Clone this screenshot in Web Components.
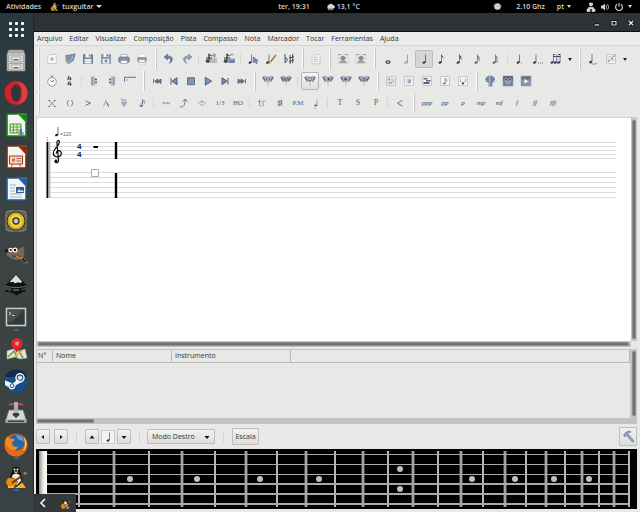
<!DOCTYPE html>
<html lang="pt">
<head>
<meta charset="utf-8">
<title>tuxguitar</title>
<style>
    html, body {
        margin: 0;
        height: 100%;
    }
    body {
        display: flex;
        flex-direction: column;
        overflow: hidden;
        background: #000;
        color: #2e3436;
        font-family: "Open Sans", "Noto Sans", sans-serif;
        font-size: 7px;
        line-height: 10px;
    }
    .desktop {
        flex: 1;
        display: flex;
        min-height: 0;
    }
</style>
</head>
<body>
<top-bar></top-bar>
<div class="desktop">
    <side-dock></side-dock>
    <app-window>
        <menu-bar slot="menu"></menu-bar>
        <tool-rows slot="tools"></tool-rows>
        <score-view></score-view>
        <track-list></track-list>
        <fret-controls></fret-controls>
        <fret-board></fret-board>
    </app-window>
</div>
<tray-drawer></tray-drawer>

<script>
const INK = '#26344f';

const svg = (body, size = 12, px = size) =>
    `<svg width="${px}" height="${px}" viewBox="0 0 ${size} ${size}" fill="none" aria-hidden="true">${body}</svg>`;

// note head with stem and flags, stem foot at x,y
function note(x, y, flags = 0, color = INK, hollow = false) {
    let s = `<ellipse cx="${x - 1.4}" cy="${y}" rx="1.6" ry="1.1" transform="rotate(-25 ${x - 1.4} ${y})" ${hollow ? `stroke="${color}" stroke-width=".7"` : `fill="${color}"`}/>`;
    s += `<path d="M${x} ${y}V${y - 8}" stroke="${color}" stroke-width=".6"/>`;
    for (let i = 0; i < flags; i++) {
        const t = y - 8 + i * 1.6;
        s += `<path d="M${x} ${t}c.3 1.6 2.8 2 2 4.600c-.1-1.7-1-2.3-2-2.7z" fill="${color}"/>`;
    }
    return s;
}

const paper = '<path d="M1.5 1.5h9v9h-9z" fill="#f5f5f4" stroke="#b9bcc0" stroke-width=".8"/>';
const flag = (n) => `<path d="M.8 2l2.500-.6 2.700.9 2.700-.9 2.500.6-2 4.600-1.700-.7L6 7.200l-1.500-1.300-1.700.7z" fill="#a3afc2" stroke="#7485a0" stroke-width=".6"/><path d="M1 2.200l1.800 3.300M11 2.200L9.200 5.500" stroke="#35425a" stroke-width=".9"/><path d="M6 7.500v3.500" stroke="#b2b5ba" stroke-width=".8"/>` +
    ['<path d="M4 4h1.200M7 4h1.200" stroke="#2f3b52"/>', '<path d="M4 2.500v3M6 3v3M8 2.500v3" stroke="#35425a" stroke-width=".8"/>', '<circle cx="6" cy="4.300" r="1.300" fill="#fff" stroke="#35425a" stroke-width=".7"/>', '<path d="M7.500 2.800L5 4.300l2.500 1.300z" fill="#35425a"/>', '<path d="M4.500 2.800L7.500 4.300 4.500 5.600z" fill="#35425a"/>', '<path d="M4.500 3l1.500 1.500L4.500 6m2-3L8 4.500 6.500 6" stroke="#35425a" stroke-width=".7"/>'][n];
const track = (mark) => `<path d="M5 5h7v5H5z" fill="#b8bbbf"/><path d="M5 2.500h3V1h2v1.500" stroke="#999da3"/><path d="M4 .8v5.400" stroke="#333d46" stroke-width="1.400"/><path d="M4 1l2.500 2M1 5h6M1 7h4" stroke="#333d46"/><ellipse cx="2.800" cy="8.300" rx="2" ry="1.700" fill="#424b55"/>${mark}`;

const ICONS = {
    fresh: '<path d="M1.800 4l2.200-2.500h6.200v9H1.800z" fill="#fbfbfb" stroke="#b8bbbf" stroke-width=".7"/><path d="M6 4v4M4 6h4" stroke="#8793a8" stroke-width=".9"/>',
    open: '<path d="M1.500 2.500l3 7L3 11 1 8z" fill="#b0b5bb"/><path d="M1.500 2.500l4-.5 5.800-1.200-1.800 6.500-4.700 3.500z" fill="#7e93b0" stroke="#5e7087" stroke-width=".6"/><path d="M4 9.500c2-1 4-3.500 5-6.500" stroke="#bac8da" stroke-width=".8"/>',
    save: '<path d="M1.500 1.500h9v9h-9z" fill="#6f84a3" stroke="#64748c" stroke-width=".8"/><path d="M3.500 1h5v3.500h-5zM2.700 6h6.600v4.500H2.700z" fill="#f4f5f6"/><path d="M6.800 1.500h1v2h-1z" fill="#566784"/><path d="M3.500 8h5" stroke="#a4a7ac" stroke-width=".7"/>',
    saveas: '<path d="M1.500 1.500h9v9h-9z" fill="#8494ab" stroke="#8490a2" stroke-width=".8"/><path d="M3.500 1h5v3h-5zM2.700 5.800h6.600v4.700H2.700z" fill="#f4f5f6"/><path d="M6 6v3M4.500 7.500L6 9.300l1.500-1.800" stroke="#566784"/><path d="M6.500 1.500h1.500v2h-1.500z" fill="#566784"/>',
    print: '<path d="M3 1.500h6v4H3z" fill="#fff" stroke="#9da2a9" stroke-width=".7"/><rect x=".8" y="4" width="10.400" height="5.500" rx="1.500" fill="#7e91ad" stroke="#5c6c84" stroke-width=".7"/><path d="M2.800 7.500h6.400V10.500H2.800z" fill="#fafafa" stroke="#8c929a" stroke-width=".6"/>',
    preview: '<path d="M2.500.8h7v10.400h-7z" fill="#fff" stroke="#c6c8ca" stroke-width=".6"/><rect x="1.300" y="4" width="9.400" height="4.500" rx="1" fill="#999"/><path d="M3 6.500h6v3H3z" fill="#f8f8f8" stroke="#777" stroke-width=".5"/>',
    undo: '<path d="M4.500 1L1 4l3.500 3V5.200c3-.2 4 1 2 5.300 4.500-3 4-7.600-2-7.600z" fill="#6c80a0" stroke="#475876" stroke-width=".5"/>',
    redo: '<path d="M7.500 1L11 4 7.500 7V5.200c-3-.2-4 1-2 5.300-4.500-3-4-7.600 2-7.600z" fill="#91a2bb" stroke="#6c7d99" stroke-width=".5"/>',
    trackadd: track('<path d="M8 3h3M9.500 1.500v3" stroke="#6e7782" stroke-width=".8"/>'),
    trackdel: track('<path d="M5.500 6.500h6.500v3.500H5.500z" fill="#7287a8"/>'),
    selnote: note(4.5, 9.5) + '<path d="M6 4l.5 6 1.500-1.500 1.400 2.300 1-.6-1.300-2.200 2-.4z" fill="#7288ac" stroke="#465775" stroke-width=".5"/>',
    edit: note(4, 9.5) + '<path d="M11 2L5.500 8.800" stroke="#a07a3a" stroke-width="1.500"/><path d="M6 8L4 11" stroke="#e28a1c" stroke-width="1.100"/>',
    natural: '<path d="M2 1v9M2 5.500c3-1.500 3 2 0 4.500" stroke="#333e52" stroke-width=".9"/><path d="M7.200 2v9M9.700 1v9M6 5.200l5-1.500M6 8.500L11 7" stroke="#333e52" stroke-width=".9"/>',
    docgray: '<path d="M2 4l2.500-2.500H10v9.300H2z" fill="#f2f2f2" stroke="#c3c4c6" stroke-width=".8"/><path d="M4 4.500h4M3.500 6.500h5M3.500 8.500h5M5 3v6" stroke="#c0c2c5" stroke-width=".7"/>',
    mix: '<path d="M1 2h10v8.500H1z" fill="#eeefef" stroke="#c9cbcd" stroke-width=".7"/><path d="M1 1.500h3m4 0h3" stroke="#999ea5"/><circle cx="6" cy="5" r="2.300" fill="#848c96"/><path d="M2.500 9.500c1-3 6-3 7 0zM2 5h8" fill="#a4a9b0" stroke="#81868e" stroke-width=".7"/>',
    whole: '<ellipse cx="6" cy="9" rx="2" ry="1.300" stroke="#26344f" stroke-width="1.100"/>',
    half: note(7.5, 9.5, 0, '#69758a', true),
    n4: note(7.5, 9.5),
    n8: note(5.5, 9.5, 1),
    n16: note(5.5, 9.5, 2),
    n32: note(5.5, 9.5, 3, '#566078'),
    n64: note(5.5, 9.5, 4, '#566078'),
    dot: note(5.500, 9.5) + '<circle cx="7.500" cy="10" r=".6" fill="#69758a"/>',
    ddot: note(4, 9.5) + '<path d="M6 10h1m1 0h1m1 0h1" stroke="#69758a"/>',
    triplet: note(3.500, 9.5) + note(6.800, 9.5) + note(10.100, 9.5) + '<path d="M3 3.500h7.500M3 1.500h2m3 0h2.500" stroke="#33405a" stroke-width=".9"/>',
    tie: note(5, 9) + '<path d="M4 10c1.500 1.500 5 1.500 6 0" stroke="#69758a" stroke-width=".8"/>',
    chord: paper + '<path d="M3 3.500h6M3 3.500v5m2-5v5m2-5v5m2-5v5M3 7h6" stroke="#b2b6bd" stroke-width=".5"/><circle cx="4" cy="8" r=".8" fill="#566784"/><circle cx="7" cy="5.500" r=".8" fill="#566784"/><circle cx="9" cy="3" r=".7" fill="#566784"/>',
    tempo: '<circle cx="6" cy="6.800" r="4.300" fill="#fafafa" stroke="#9b9d9f" stroke-width="1"/><path d="M6 1v1.500M4.700 1h2.600" stroke="#888" stroke-width=".9"/><path d="M6 7l2-2M4.500 5.500L6 7" stroke="#d03838" stroke-width=".9"/>',
    meter: '<path d="M5.200 1L3.800 4h3.600M6.500 2.300v3M5.500 6.300L4 9.200h3.500M6.500 7.500v3.300" stroke="#35435c" stroke-width="1.100"/>',
    repopen: '<path d="M4 1.500v9" stroke="#8c9bb3" stroke-width="1.800"/><path d="M6 1.500v9" stroke="#55627a" stroke-width=".7"/><circle cx="8" cy="4.500" r=".9" fill="#38465f"/><circle cx="8" cy="7.500" r=".9" fill="#38465f"/>',
    repclose: '<path d="M8 1.500v9" stroke="#8c9bb3" stroke-width="1.800"/><path d="M6 1.500v9" stroke="#55627a" stroke-width=".7"/><circle cx="4" cy="4.500" r=".9" fill="#38465f"/><circle cx="4" cy="7.500" r=".9" fill="#38465f"/>',
    repalt: '<path d="M.5 6.500V2.300H12" stroke="#54637d" stroke-width=".9"/><path d="M3 4v2" stroke="#7c879a" stroke-width=".7"/>',
    first: '<path d="M2.500 4v4.500M7 4L3.500 6.200 7 8.500zM10 4L7 6.200 10 8.500z" fill="#6d7f9b" stroke="#3e4e69" stroke-width=".7"/>',
    prev: '<path d="M3 3v6.500M9 2.800L4 6.200l5 3.500z" fill="#8090a9" stroke="#3e4e69" stroke-width=".9"/>',
    stop: '<path d="M2.500 2.700h7v7h-7z" fill="#7f93b2" stroke="#4d5d79" stroke-width=".8"/>',
    play: '<path d="M3.300 2.300L9.700 6.200l-6.400 4z" fill="#7f93b2" stroke="#3e4e69" stroke-width=".8"/>',
    next: '<path d="M9 3v6.500M3 2.800l5 3.400-5 3.500z" fill="#8090a9" stroke="#3e4e69" stroke-width=".9"/>',
    last: '<path d="M9.500 4v4.500M5 4l3.500 2.200L5 8.500zM2 4l3 2.200-3 2.300z" fill="#6d7f9b" stroke="#3e4e69" stroke-width=".7"/>',
    m0: flag(0), m1: flag(1), m2: flag(2), m3: flag(3), m4: flag(4), m5: flag(5),
    fretview: paper + '<path d="M1.500 4h9M1.500 6h9M1.500 8h9M4 2v8M7 2v8" stroke="#b2b5ba" stroke-width=".6"/><path d="M3 4h2m3 2h1M4 8h3" stroke="#6a717b" stroke-width=".8"/>',
    lyric: paper + '<path d="M3 4h6M3 6h5M3 8h3" stroke="#9ba8ba" stroke-width=".7"/><path d="M5.500 4.500v4l2.500-1V5z" fill="#8a9cb6"/>',
    multi: paper + '<path d="M2.500 3h4v1.500h-4zM5 5h4.500v1.500H5zM2.500 7h6v2h-6z" fill="#566784"/>',
    scoreview: paper + '<path d="M6.300 8.500V3c.2 1.500 2 1.500 1.500 3.300" stroke="#6f8098" stroke-width=".8"/><ellipse cx="5.200" cy="8.500" rx="1.400" ry="1" fill="#6f8098"/>',
    mixer: paper + '<path d="M3.500 3.500v3m2.500 0v3m2.500-6v3M3 5.500l3 3.300 3-3.300" stroke="#8f949b" stroke-width=".7"/><circle cx="6" cy="8.500" r=".9" fill="#333"/>',
    guitar: '<path d="M2.500 2.500L4 .8h4.500L9.800 2.500v4L8.300 8v3.500H4.500V8L2.500 6.500z" fill="#7188a8"/><path d="M2.300 2.500v4m7.700-4v4" stroke="#45536b" stroke-width="1.300" stroke-dasharray="1 .6"/><path d="M5.500 1v10" stroke="#a8bad2"/>',
    eq: '<path d="M1 1h10v10H1z" fill="#76839a" stroke="#8f98a5" stroke-width=".6"/><path d="M1.500 1.500h9v4h-9z" fill="#4c5666"/><circle cx="4" cy="4.500" r="1.600" stroke="#b6c0cf" stroke-width=".7"/><circle cx="8" cy="4.500" r="1.600" stroke="#b6c0cf" stroke-width=".7"/><path d="M3.500 6.500L6 8.500l2.500-2" stroke="#cbd2dc"/>',
    player: '<path d="M1 1h10v10H1z" fill="#8595ad" stroke="#95a0b0" stroke-width=".6"/><path d="M1.500 1.500h9v3h-9z" fill="#657389"/><path d="M4.500 4l3.800 2.200-3.800 2.200z" fill="#fff"/>',
    dead: '<path d="M3.500 4l5 5M8.500 4L3.500 9" stroke="#8793a9" stroke-width="1"/><path d="M2.500 3.500H4M8 3.500h1.500M2.500 9.500H4m4 0h1.500" stroke="#45546f" stroke-width=".9"/>',
    ghost: '<path d="M4.500 3Q1.800 6 4.500 9.300M7.500 3q2.700 3 0 6.300" stroke="#6d7c95" stroke-width=".9"/>',
    accent: '<path d="M3.500 3.800l5 2.300-5 2.300" stroke="#566784" stroke-width=".9"/>',
    heavy: '<path d="M3.500 9.500L6 3.500l2.500 6" stroke="#8f9aad" stroke-width=".9"/><path d="M7 6l1.500 3.500" stroke="#47556e" stroke-width=".9"/>',
    harmonic: '<path d="M3 2h1v2m1-2v2m0-1h1.500m.5-1v2H9" stroke="#7a879d" stroke-width=".6"/><path d="M3.300 5.300h5.400L6 9.700z" fill="#a8b4c7" stroke="#7888a2" stroke-width=".6"/>',
    grace: '<path d="M6.500 9V2.500c.2 2 2.500 2 2 4" stroke="#5d6d88" stroke-width=".8"/><ellipse cx="5.200" cy="9" rx="1.500" ry="1" fill="#5d6d88"/><path d="M3 8l6.500-4.500" stroke="#8591a6" stroke-width=".7"/>',
    vibrato: '<path d="M2.500 6.700l1.500-1.200 1.500 1.300L7 5.500l1.500 1.300L10 5.600" stroke="#566784" stroke-width=".9"/>',
    bend: '<path d="M2 10c4 0 5-2 5-7M4.800 4.500L7.200 2l2.300 2.500" stroke="#657692" stroke-width="1"/>',
    tremolo: '<path d="M2 5l4 4 4-4M6 3v3M4 4l2 2 2-2" stroke="#8d99ad" stroke-width=".8"/>',
    trill: '<path d="M3.500 2.500v6q.7 1 2 .2M2 4.500h3.500M7 9.300v-5q1.500-1 2.500 0" stroke="#77849b" stroke-width=".8"/>',
    trem: '<path d="M5 3v6.500M7.300 2.500V9M3.500 5.500l5-1.500m-5 4l5-1.500" stroke="#66748e" stroke-width=".9"/>',
    stacc: '<path d="M7 8.500V2.500" stroke="#7e8ba1" stroke-width=".7"/><ellipse cx="5.700" cy="8.500" rx="1.500" ry="1" fill="#566784"/><circle cx="5" cy="11" r=".5" fill="#566784"/>',
    fade: '<path d="M8.500 3.300L3.500 6.200l5 2.900" stroke="#566784" stroke-width=".9"/>',
    hammer: '<path d="M1.500 5.500L4 2l4-1 1.200 1-3 .8-.4 1L12 11l-1.300 1.300-6.300-7L3 7z" fill="#91a1b8" stroke="#5f7088" stroke-width=".6"/>'
};

// g = grip, | = divider, v = drop arrow, * = active, + = raised, "text and 'text are lettered
const ROWS = [
    'g fresh open save saveas print preview G undo redo | trackadd trackdel | selnote edit natural G docgray G mix mix G whole half n4* n8 n16 n32 n64 | dot ddot triplet v G tie chord v',
    'g tempo meter | repopen repclose repalt G first~ prev~ stop~ play~ next~ last~ G m0 m1 | m2+ m3 m4 m5 G fretview lyric multi scoreview mixer G guitar eq player',
    'g dead ghost accent heavy harmonic grace | vibrato bend tremolo "1/3 "HO | trill trem "P.M stacc | "T "S "P | fade G \'ppp \'pp \'p \'mp \'mf \'f \'ff \'fff'
];

class ToolButton extends HTMLElement {
    connectedCallback() {
        const shadow = this.attachShadow({ mode: 'open' });
        const icon = this.getAttribute('icon');
        shadow.innerHTML = `
            <style>
                :host { display: block; flex: none; width: 18px; }
                :host([narrow]) { width: 17px; }
                button {
                    display: flex;
                    align-items: center;
                    justify-content: center;
                    box-sizing: border-box;
                    width: 100%;
                    height: 18px;
                    padding: 0;
                    border: 1px solid transparent;
                    border-radius: 2px;
                    background: none;
                    color: #4f5d77;
                    font: 8px/10px "Liberation Serif", serif;
                }
                :host([active]) button { background: #d5d5d4; border-color: #bdbdbb; }
                :host([raised]) button { background: linear-gradient(#f6f6f5, #dededd); border-color: #b4b4b2; }
                :host([dynamic]) button { font-style: italic; font-size: 7px; color: #3b4861; }
                :host([small]) button { font-size: 7px; }
                svg { flex: none; }
            </style>
            <button type="button">${icon ? svg(ICONS[icon]) : '<slot></slot>'}</button>
        `;
    }
}
customElements.define('tool-button', ToolButton);

class ToolRows extends HTMLElement {
    connectedCallback() {
        const shadow = this.attachShadow({ mode: 'open' });
        shadow.innerHTML = `
            <style>
                :host { display: block; padding: 2px 0 3px; }
                .row { display: flex; align-items: center; height: 22px; }
                i { display: block; flex: none; box-sizing: border-box; height: 20px; }
                .grip { width: 9px; padding: 0 3px 0 4px; }
                .grip.lead { width: 7px; padding: 0 3px 0 2px; }
                .grip::before { content: ""; display: block; height: 100%; background: #fff; border-right: 1px solid #c4c4c2; width: 1px; }
                .rule { width: 6px; padding: 5px 3px 5px 2px; }
                .rule::before { content: ""; display: block; height: 100%; background: #d5d5d3; }
                .drop { width: 10px; display: flex; align-items: center; justify-content: center; }
                .drop::before { content: ""; border: 2px solid transparent; border-top: 3px solid #222; border-bottom: 0; }
            </style>
            ${ROWS.map(row => `<div class="row">${row.split(' ').map(ToolRows.cell).join('')}</div>`).join('')}
        `;
    }
    static cell(t) {
        if (t === 'g') return '<i class="grip lead"></i>';
        if (t === 'G') return '<i class="grip"></i>';
        if (t === '|') return '<i class="rule"></i>';
        if (t === 'v') return '<i class="drop"></i>';
        if (t[0] === '"') return `<tool-button ${t.length > 2 ? 'small' : ''}>${t.slice(1)}</tool-button>`;
        if (t[0] === "'") return `<tool-button dynamic>${t.slice(1)}</tool-button>`;
        const flags = (t.includes('*') ? 'active ' : '') + (t.includes('+') ? 'raised ' : '') + (t.includes('~') ? 'narrow' : '');
        return `<tool-button icon="${t.replace(/[*+~]/, '')}" ${flags}></tool-button>`;
    }
}
customElements.define('tool-rows', ToolRows);

const TUX = '<ellipse cx="12" cy="13" rx="6" ry="8" fill="#111"/><circle cx="12" cy="5.500" r="4" fill="#161616"/><path d="M8 11c1-3 7-3 8 0l1 5-4 4H9z" fill="#e9e9e9"/><circle cx="10.500" cy="4.500" r="1" fill="#fff"/><circle cx="13.500" cy="4.500" r="1" fill="#fff"/><path d="M9.500 6.500h5L12 9z" fill="#f4b41a"/><path d="M3 14c3-3 5 0 7-1l4 4c-2 1-2 5-6 5.500S0 18 3 14z" fill="#e58a14" stroke="#7d4208" stroke-width=".7"/><path d="M8 18L21 8.500" stroke="#5a3716" stroke-width="1.800"/><path d="M19 8l3-1.500 1 2L20.500 10z" fill="#888"/><path d="M4 22h6m4 0h6l-2-3z" stroke="#f2b31c" stroke-width="2"/>';
const office = (dark, light, inner) => `<path d="M3 1h12l7 7v15H3z" fill="#f5f5f3" stroke="${dark}" stroke-width="1.600"/><path d="M13 .5h9.500V10z" fill="${light}"/><path d="M15 1l7 8V2z" fill="${dark}"/>${inner}`;

const DOCK = [
    ['Arquivos', '<path d="M5 1h14l2 4v17H3V5z" fill="#d8d8d6" stroke="#777" stroke-width=".8"/><path d="M5 1h14l1.500 3.500h-17z" fill="#a5a8a6"/><path d="M4.500 6h15v7h-15zM4.500 14.500h15v6.500h-15z" fill="#d3d4d1" stroke="#9a9b98" stroke-width=".8"/><path d="M8 8h8v3H8zM8 16h8v3H8z" fill="#f0f0ee" stroke="#8a8b88" stroke-width=".6"/><path d="M10 10.500h4m-4 8h4" stroke="#555"/>'],
    ['Opera', '<ellipse cx="12" cy="12" rx="11.500" ry="11.700" fill="#d71f27"/><path d="M12 .5c7 0 11.500 5 11.500 11.500S19 23.500 12 23.500c4-1 6-6 6-11.500S16 1.500 12 .5z" fill="#e93a3c"/><ellipse cx="12" cy="12" rx="5" ry="8.700" fill="#2b3a3f"/>'],
    ['Calc', office('#1c7d1c', '#39b229', '<path d="M6 11h11v9H6z" fill="#dff0d8" stroke="#3b9d2f"/><path d="M6 14h11m-11 3h11M9.500 11v9M13 11v9" stroke="#3b9d2f" stroke-width=".8"/><path d="M14 18h2v4h-2z" fill="#e9a12c"/><path d="M16 16h2v6h-2z" fill="#3977b8"/><path d="M18 19h2v3h-2z" fill="#7eb6e2"/>')],
    ['Impress', office('#84281a', '#b9461f', '<path d="M5.500 11h13v8h-13z" fill="#f4ddd2" stroke="#8e3a25"/><path d="M8 13.500h3v3H8z" fill="#e06a22"/><path d="M12.500 13.500H17m-4.500 2.500H17" stroke="#c53"/><path d="M9 19l-2 3m8-3l2 3" stroke="#8e3a25" stroke-width=".8"/>')],
    ['Writer', office('#235a9c', '#3b80c8', '<path d="M6 8h6M6 11h5M6 14h5M6 17h12M6 20h12" stroke="#9fb1c3" stroke-width="1.200"/><path d="M12 10h8v6h-8z" fill="#315f91"/><path d="M13 15l2-3 2 2 1-1 2 2z" fill="#dce9f5"/>')],
    ['Rhythmbox', '<rect x="2" y="2" width="20" height="20" rx="3" fill="#5e605d" stroke="#8a8c86"/><circle cx="12" cy="12" r="9" fill="#d9b21b" stroke="#2c2c26"/><circle cx="12" cy="12" r="6.500" fill="#ecd03c"/><circle cx="12" cy="12" r="3.700" fill="#3c3c3b"/><circle cx="12" cy="12" r="2.200" fill="#c9c9c4"/>'],
    ['GIMP', '<path d="M2 10c3-4 7-4 10-1 3-1 6-4 8-4l1 9c-3 6-10 7-15 3-3-1-5-4-4-7z" fill="#746858" stroke="#403930" stroke-width=".7"/><circle cx="6.500" cy="9" r="2.200" fill="#fff"/><circle cx="11" cy="9" r="2.500" fill="#fff"/><circle cx="6.700" cy="9" r="1.100" fill="#111"/><circle cx="11" cy="9" r="1.300" fill="#111"/><ellipse cx="2.500" cy="10" rx="2" ry="1.800" fill="#1b1b1b"/><path d="M8 15c4 1 6-1 9 1" stroke="#312b24"/><path d="M12 15l7 3" stroke="#d07a2a" stroke-width="1.500"/><path d="M18 16.500c3 0 4 3 5.500 5.500-3 0-5.500-1-6-4z" fill="#222" stroke="#bbb" stroke-width=".5"/>'],
    ['Inkscape', '<path d="M12 1.500L1.500 12c-.5 3 5 2 6 4s-3 2-2 3 5 1 7 4c1-2 5-2 6-4s-3-2-1-3 6-1 5-4z" fill="#121212"/><path d="M12 2L6 8.500c1 2 2-1 4 1s3-1 5 0 2 0 3-1z" fill="#dedfe3"/><path d="M2 13c4 2 16 2 20 0" stroke="#81858a" stroke-width=".8"/><path d="M9 17h6" stroke="#888"/><ellipse cx="3" cy="18" rx="2" ry="1" fill="#111"/><ellipse cx="20" cy="18" rx="2" ry="1" fill="#111"/>'],
    ['Terminal', '<path d="M2.500 3.500h19v17h-19z" fill="#343a37" stroke="#d0d1cd" stroke-width="1.500"/><path d="M4 5h16L8 17H4z" fill="#4a504b"/><path d="M5 7l2 1.500L5 10m3 .5h2.500" stroke="#eee" stroke-width=".9"/>', 1],
    ['Mapas', '<path d="M3 14l6-2 6 2 6-2 2 9-7 1-5-2-8 2z" fill="#e3e4dd" stroke="#aaa" stroke-width=".5"/><path d="M4 20l6-6 3 6M15 14l4 7" stroke="#5fa544" stroke-width="1.600"/><path d="M10 20l9-7" stroke="#e7b93b" stroke-width="1.400"/><path d="M12.500 16c-1-4-5-5-5-9.500a5.500 5.500 0 0 1 11 0C18.500 11 14 12 12.500 16z" fill="#e5252b"/><circle cx="13" cy="6.500" r="2" fill="#fff" opacity=".5"/>'],
    ['Steam', '<circle cx="12" cy="12" r="11.700" fill="#174e86"/><path d="M1 8a11.700 11.700 0 0 1 22 0z" fill="#14294e"/><circle cx="16" cy="8.800" r="4" stroke="#f3f7fb" stroke-width="1.500"/><circle cx="16" cy="8.800" r="2.300" fill="#d6e0ea"/><path d="M1 11.500l8 3 4-4 4.500 2.500-6 3.500c0 5-6 5-7 1.500L1 16z" fill="#f4f8fc"/><circle cx="8" cy="16.700" r="1.900" stroke="#174e86"/>'],
    ['Discos', '<path d="M5 9h14l3.500 11h-21z" fill="#d8d9d7" stroke="#777" stroke-width=".7"/><path d="M1.500 18.500h21V22h-21z" fill="#a3a5a3"/><path d="M4 20.300h16" stroke="#3c3d3c" stroke-width="1.500"/><path d="M5 2h14v2.500H5z" fill="#d23b3b"/><path d="M10 1h4v13h-4z" fill="#aeb0af"/><path d="M9 12h6v2h-6z" fill="#3d4041"/><path d="M8 13.500h8L12 17z" fill="#3d4041"/>'],
    ['Firefox', '<circle cx="12" cy="12" r="11.500" fill="#e66a12"/><circle cx="12.500" cy="9.500" r="8.200" fill="#2765ac"/><path d="M12 2c5 0 8 3 8 7-3-3-5-1-7-4z" fill="#55a2d8"/><path d="M1.500 6L4 3l2 3c2-1 4 0 5 1L8 9.500c0 4 3 5 6 4-1 4-5 5-9 2C3 12 1 11 1.500 6z" fill="#f28b1b"/><path d="M20 4c4 5 3 11-1 14 3-6 2-9 1-14z" fill="#fad44b"/>', 1],
    ['TuxGuitar', TUX, 1]
];

class DockItem extends HTMLElement {
    connectedCallback() {
        const shadow = this.attachShadow({ mode: 'open' });
        const [label, art, running] = DOCK[this.getAttribute('index')];
        shadow.innerHTML = `
            <style>
                :host { display: flex; flex-direction: column; align-items: center; height: 32px; }
                button { display: block; border: 0; padding: 4px 0 0; margin: 0; background: none; height: 29px; }
                svg { display: block; }
                i { width: 5px; height: 2px; background: #3667a5; border-radius: 1px; }
            </style>
            <button type="button" aria-label="${label}">${svg(art, 24)}</button>
            ${running ? '<i></i>' : ''}
        `;
    }
}
customElements.define('dock-item', DockItem);

class SideDock extends HTMLElement {
    connectedCallback() {
        const shadow = this.attachShadow({ mode: 'open' });
        shadow.innerHTML = `
            <style>
                :host {
                    display: block;
                    flex: none;
                    box-sizing: border-box;
                    width: 34px;
                    padding-right: 1px;
                    overflow: hidden;
                    background: linear-gradient(#27383f, #3d4443 45%, #394142);
                    border-right: 1px solid #152b30;
                }
                .apps {
                    display: grid;
                    grid-template-columns: repeat(3, 3px);
                    gap: 3px;
                    justify-content: center;
                    align-content: center;
                    height: 31px;
                    padding-top: 1px;
                    box-sizing: border-box;
                }
                .apps b { height: 3px; border-radius: 1px; background: #fff; }
            </style>
            <div class="apps">${'<b></b>'.repeat(9)}</div>
            ${DOCK.map((d, i) => `<dock-item index="${i}"></dock-item>`).join('')}
        `;
    }
}
customElements.define('side-dock', SideDock);

class TopBar extends HTMLElement {
    connectedCallback() {
        const shadow = this.attachShadow({ mode: 'open' });
        shadow.innerHTML = `
            <style>
                :host {
                    display: grid;
                    grid-template-columns: 1fr auto 1fr;
                    align-items: center;
                    height: 13px;
                    flex: none;
                    padding: 0 8px 0 6px;
                    background: #000;
                    color: #d6d6d4;
                    font-weight: 600;
                }
                div, span { display: flex; align-items: center; }
                svg { display: block; }
                .app { margin-left: 9px; gap: 3px; }
                .clock { gap: 16px; }
                .weather { gap: 2px; }
                .status { justify-content: flex-end; }
                .lang { gap: 3px; margin: 0 15px 0 12px; }
                .cpu { margin-left: 14px; }
                .tray { gap: 4px; }
                u { border: 3px solid transparent; border-top-color: #d6d6d4; border-bottom: 0; }
                .lang u, .tray u { border-width: 3px 2px 0; }
            </style>
            <div>Atividades<span class="app">${svg(TUX.replace(/#1[16]{2,5}/g, '#444'), 24, 9)}tuxguitar <u></u></span></div>
            <div class="clock"><span>ter, 19:31</span><span class="weather">${svg('<path d="M2 5a2 2 0 0 1 2-2 2.500 2.500 0 0 1 4 1 1.500 1.500 0 0 1 0 3H2zM2 8h6" fill="#d6d6d4" stroke="#d6d6d4" stroke-width=".8"/><path d="M3 9h1m2 0h1" stroke="#999"/>', 10, 9)}13,1 °C</span></div>
            <div class="status">
                ${svg('<circle cx="5" cy="5" r="3.600" fill="#d8d8d6"/><path d="M.5 4.500h9" stroke="#aaa"/>', 10, 9)}
                <span class="cpu">2.10 Ghz</span>
                <span class="lang">pt <u></u></span>
                <span class="tray">
                    ${svg('<path d="M3.500 1h3v2.500h-3zM1 7h3v2.500H1zM6 7h3v2.500H6zM5 3v2.500M2.500 7V5.500h5V7" fill="#d6d6d4" stroke="#d6d6d4" stroke-width=".7"/>', 10)}
                    ${svg('<path d="M1 3.500h2L5 1.500v7L3 6.500H1z" fill="#d6d6d4"/><path d="M6 3q1.500 2 0 4M7.500 2q2.500 3 0 6" stroke="#aaa" stroke-width=".9"/>', 10)}
                    ${svg('<path d="M3 2.300a3.400 3.400 0 1 0 4 0M5 1v3.800" stroke="#d6d6d4" stroke-width="1.100"/>', 10)}
                    <u></u>
                </span>
            </div>
        `;
    }
}
customElements.define('top-bar', TopBar);

class AppWindow extends HTMLElement {
    connectedCallback() {
        const shadow = this.attachShadow({ mode: 'open' });
        shadow.innerHTML = `
            <style>
                :host { flex: 1; min-width: 0; display: flex; flex-direction: column; background: #e8e8e7; }
                header {
                    display: flex;
                    justify-content: flex-end;
                    align-items: center;
                    gap: 7px;
                    box-sizing: border-box;
                    height: 19px;
                    padding-right: 4px;
                    background: #2d3234;
                    border-bottom: 1px solid #0d0f10;
                }
                header button { border: 0; padding: 0; background: none; height: 12px; }
                main { flex: 1; min-height: 0; display: flex; flex-direction: column; padding: 0 3px 3px 2px; }
            </style>
            <header>
                <button type="button" aria-label="Minimizar">${svg('<path d="M3 7h4" stroke="#000" stroke-width="3"/><path d="M3 7h4" stroke="#ddd" stroke-width="1.400"/>', 10)}</button>
                <button type="button" aria-label="Maximizar">${svg('<path d="M3 3.500h4v3.500H3z" stroke="#000" stroke-width="2.400"/><path d="M3 3.500h4v3.500H3z" stroke="#ddd" stroke-width="1.200"/>', 10)}</button>
                <button type="button" aria-label="Fechar">${svg('<path d="M3 3l4 4M7 3L3 7" stroke="#000" stroke-width="3"/><path d="M3 3l4 4M7 3L3 7" stroke="#eee" stroke-width="1.400"/>', 10)}</button>
            </header>
            <slot name="menu"></slot>
            <main><slot name="tools"></slot><slot></slot></main>
        `;
    }
}
customElements.define('app-window', AppWindow);

class MenuBar extends HTMLElement {
    connectedCallback() {
        const shadow = this.attachShadow({ mode: 'open' });
        const items = ['Arquivo', 'Editar', 'Visualizar', 'Composição', 'Pista', 'Compasso', 'Nota', 'Marcador', 'Tocar', 'Ferramentas', 'Ajuda'];
        shadow.innerHTML = `
            <style>
                :host { display: block; flex: none; background: #ebebea; border-bottom: 1px solid #d4d4d2; }
                nav { display: flex; gap: 7px; padding: 0 3px; height: 13px; align-items: center; }
                button { border: 0; padding: 0; background: none; color: inherit; font: inherit; }
            </style>
            <nav>${items.map(t => `<button type="button">${t}</button>`).join('')}</nav>
        `;
    }
}
customElements.define('menu-bar', MenuBar);

class ScrollStrip extends HTMLElement {
    connectedCallback() {
        const shadow = this.attachShadow({ mode: 'open' });
        shadow.innerHTML = `
            <style>
                :host { display: flex; box-sizing: border-box; height: 6px; padding: 1px; background: #c2c3c2; }
                :host([vertical]) { height: auto; width: 6px; }
                i { flex: 1; margin: 0 1px; border: 1px solid #8b8e8d; border-width: 1px 0; background: #6f7372; border-radius: 2px; box-sizing: border-box; }
                :host([vertical]) i { margin: 1px 0; border-width: 0 1px; }
                :host([short]) i { flex: 0 0 57px; margin: 0; }
            </style>
            <i></i>
        `;
    }
}
customElements.define('scroll-strip', ScrollStrip);

class ScoreView extends HTMLElement {
    connectedCallback() {
        const shadow = this.attachShadow({ mode: 'open' });
        const line = y => `<line x1="11" x2="97.5%" y1="${y}" y2="${y}" stroke="#dcdcdc"/>`;
        shadow.innerHTML = `
            <style>
                :host {
                    flex: 1;
                    min-height: 0;
                    display: grid;
                    grid-template: 1fr 6px / 1fr 6px;
                    border-top: 1px solid #cfcfcd;
                    margin-bottom: 2px;
                }
                svg { display: block; width: 100%; height: 100%; background: #fff; box-shadow: inset 1px 0 #cfcfcd; }
                text { font-family: "Liberation Sans", sans-serif; }
            </style>
            <svg fill="none">
                ${[24.5, 28.5, 32.5, 36.5, 40.5, 54.5, 59.5, 64.5, 69.5, 74.5, 79.5].map(line).join('')}
                <path d="M11.500 24v56" stroke="#000" stroke-width="2"/>
                <path d="M13.500 24v56" stroke="#bbb" stroke-width="2"/>
                <path d="M80 24v17M80 55v25" stroke="#000" stroke-width="2.400"/>
                <text x="10" y="23" font-size="5" fill="#f66">1</text>
                ${note(22, 17, 0, '#111')}
                <text x="24" y="18" font-size="5" fill="#666">=120</text>
                <path d="M19 43c0 2.500 4 2.500 3.500-1L21 26c-.6-4 2.600-5 2.300-1.500-.3 4-6 6-6 10.500 0 5 8 5 8 .5 0-4-5-3.500-5 0" stroke="#000" stroke-width="1.200"/>
                <circle cx="20" cy="43" r="1.400" fill="#000"/>
                <text x="41" y="31" font-size="8" font-weight="bold" fill="#111">4</text>
                <text x="41" y="39" font-size="8" font-weight="bold" fill="#111">4</text>
                <path d="M57.500 29h4.500" stroke="#000" stroke-width="2"/>
                <path d="M55.500 51.500h7v7h-7z" fill="#fff" stroke="#aaa"/>
            </svg>
            <scroll-strip vertical></scroll-strip>
            <scroll-strip></scroll-strip>
        `;
    }
}
customElements.define('score-view', ScoreView);

class TrackList extends HTMLElement {
    connectedCallback() {
        const shadow = this.attachShadow({ mode: 'open' });
        shadow.innerHTML = `
            <style>
                :host { display: grid; grid-template: 69px 6px / 1fr 6px; flex: none; }
                .pane { border: 1px solid #c4c4c2; border-bottom: 0; box-sizing: border-box; }
                table { width: 100%; border-spacing: 0; table-layout: fixed; }
                th {
                    height: 13px;
                    box-sizing: border-box;
                    padding: 0 3px;
                    font-weight: normal;
                    text-align: left;
                    border-right: 1px solid #b9b9b7;
                    border-bottom: 1px solid #b9b9b7;
                }
                th:first-child { padding: 0 1px; }
                .no { width: 16px; }
                .wide { width: 119px; }
                .foot { grid-column: 1 / 3; }
            </style>
            <div class="pane">
                <table>
                    <colgroup><col class="no"><col class="wide"><col class="wide"><col></colgroup>
                    <thead><tr><th>N°</th><th>Nome</th><th>Instrumento</th><th></th></tr></thead>
                </table>
            </div>
            <scroll-strip vertical></scroll-strip>
            <scroll-strip class="foot" short></scroll-strip>
        `;
    }
}
customElements.define('track-list', TrackList);

class FretControls extends HTMLElement {
    connectedCallback() {
        const shadow = this.attachShadow({ mode: 'open' });
        const arrow = d => svg(`<path d="${d}" fill="#111"/>`, 8);
        shadow.innerHTML = `
            <style>
                :host { display: flex; flex: none; align-items: center; height: 25px; }
                button, select {
                    display: flex;
                    align-items: center;
                    justify-content: center;
                    box-sizing: border-box;
                    width: 14px;
                    height: 15px;
                    margin: 0;
                    padding: 0;
                    border: 1px solid #bebebc;
                    border-radius: 1px;
                    background: linear-gradient(#f2f2f1, #dcdcdb);
                    color: inherit;
                    font: inherit;
                }
                button + button { margin-left: 4px; }
                hr { width: 1px; height: 10px; margin: 0 8px; border: 0; background: #d3d3d1; }
                hr + .combo { margin-left: -1px; }
                .value { display: flex; justify-content: center; margin: 0 2px; border: 1px solid #cbcbc9; background: #f3f3f2; }
                .combo { display: grid; align-items: center; }
                .combo > * { grid-area: 1 / 1; }
                .combo svg { justify-self: end; margin-right: 4px; pointer-events: none; }
                select { appearance: none; width: 68px; padding: 0 4px; }
                .scale { width: 27px; height: 17px; }
                .tool { width: 18px; height: 19px; }
                .scale + .tool { margin-left: auto; }
            </style>
            <button type="button" aria-label="Anterior">${arrow('M5 2v4L2.500 4z')}</button>
            <button type="button" aria-label="Seguinte">${arrow('M3 2v4l2.500-2z')}</button>
            <hr>
            <button type="button" aria-label="Aumentar">${arrow('M1.500 5.500h5L4 2.500z')}</button>
            <span class="value">${svg(ICONS.n4)}</span>
            <button type="button" aria-label="Diminuir">${arrow('M1.500 3h5L4 6z')}</button>
            <hr>
            <div class="combo">
                <select aria-label="Modo"><option>Modo Destro</option></select>
                ${arrow('M1.500 3h5L4 6z')}
            </div>
            <hr>
            <button type="button" class="scale">Escala</button>
            <button type="button" class="tool" aria-label="Configurar">${svg(ICONS.hammer, 13)}</button>
        `;
    }
}
customElements.define('fret-controls', FretControls);

class FretBoard extends HTMLElement {
    connectedCallback() {
        const shadow = this.attachShadow({ mode: 'open' });
        const frets = [43, 78, 113, 146, 179, 210, 241, 270, 299, 327, 352, 377, 402, 425, 447, 469, 490, 510, 529, 546, 563, 578, 593];
        const dots = [[94, 30], [161, 30], [224, 30], [283, 30], [364, 20], [364, 40], [436, 30], [479, 30], [518, 30], [553, 30]];
        shadow.innerHTML = `
            <style>
                :host { display: block; flex: none; height: 60px; background: #000; }
                svg { display: block; width: 100%; height: 100%; }
            </style>
            <svg viewBox="0 0 601 60" preserveAspectRatio="xMinYMid slice">
                <defs><linearGradient id="nut"><stop stop-color="#8e8e84"/><stop offset=".5" stop-color="#e8e8de"/><stop offset="1" stop-color="#fff"/></linearGradient></defs>
                <path d="M3 2h8v56H3z" fill="url(#nut)"/>
                ${frets.map((x, i) => `<path d="M${x} 2v56" stroke="${i % 2 ? '#858585' : '#b4b4b4'}" stroke-width="${i % 2 ? 3 : 2}"/><path d="M${x} 2v56" stroke="#bcbcbc"/>`).join('')}
                ${[5, 15, 25, 35, 45, 55].map((y, i) => `<path d="M11 ${y + (i < 3 ? .5 : 0)}H593" stroke="#aea6a9" stroke-width="${i < 3 ? 1 : 2}"/>`).join('')}
                ${dots.map(([x, y]) => `<circle cx="${x}" cy="${y}" r="3" fill="#c0c0c0"/>`).join('')}
            </svg>
        `;
    }
}
customElements.define('fret-board', FretBoard);

// legacy tray, floats over the lower left corner
class TrayDrawer extends HTMLElement {
    connectedCallback() {
        const shadow = this.attachShadow({ mode: 'open' });
        shadow.innerHTML = `
            <style>
                :host {
                    position: absolute;
                    left: 33px;
                    bottom: 0;
                    display: flex;
                    align-items: center;
                    gap: 12px;
                    box-sizing: border-box;
                    width: 43px;
                    height: 18px;
                    padding: 0 5px;
                    background: #33393a;
                    border-radius: 0 2px 0 0;
                }
                button { border: 0; padding: 0; background: none; height: 10px; }
                svg { display: block; flex: none; }
            </style>
            <button type="button" aria-label="Recolher">${svg('<path d="M7 1L3 5l4 4" stroke="#fff" stroke-width="1.500"/>', 10)}</button>
            ${svg(TUX, 24, 11)}
        `;
    }
}
customElements.define('tray-drawer', TrayDrawer);
</script>
</body>
</html>
